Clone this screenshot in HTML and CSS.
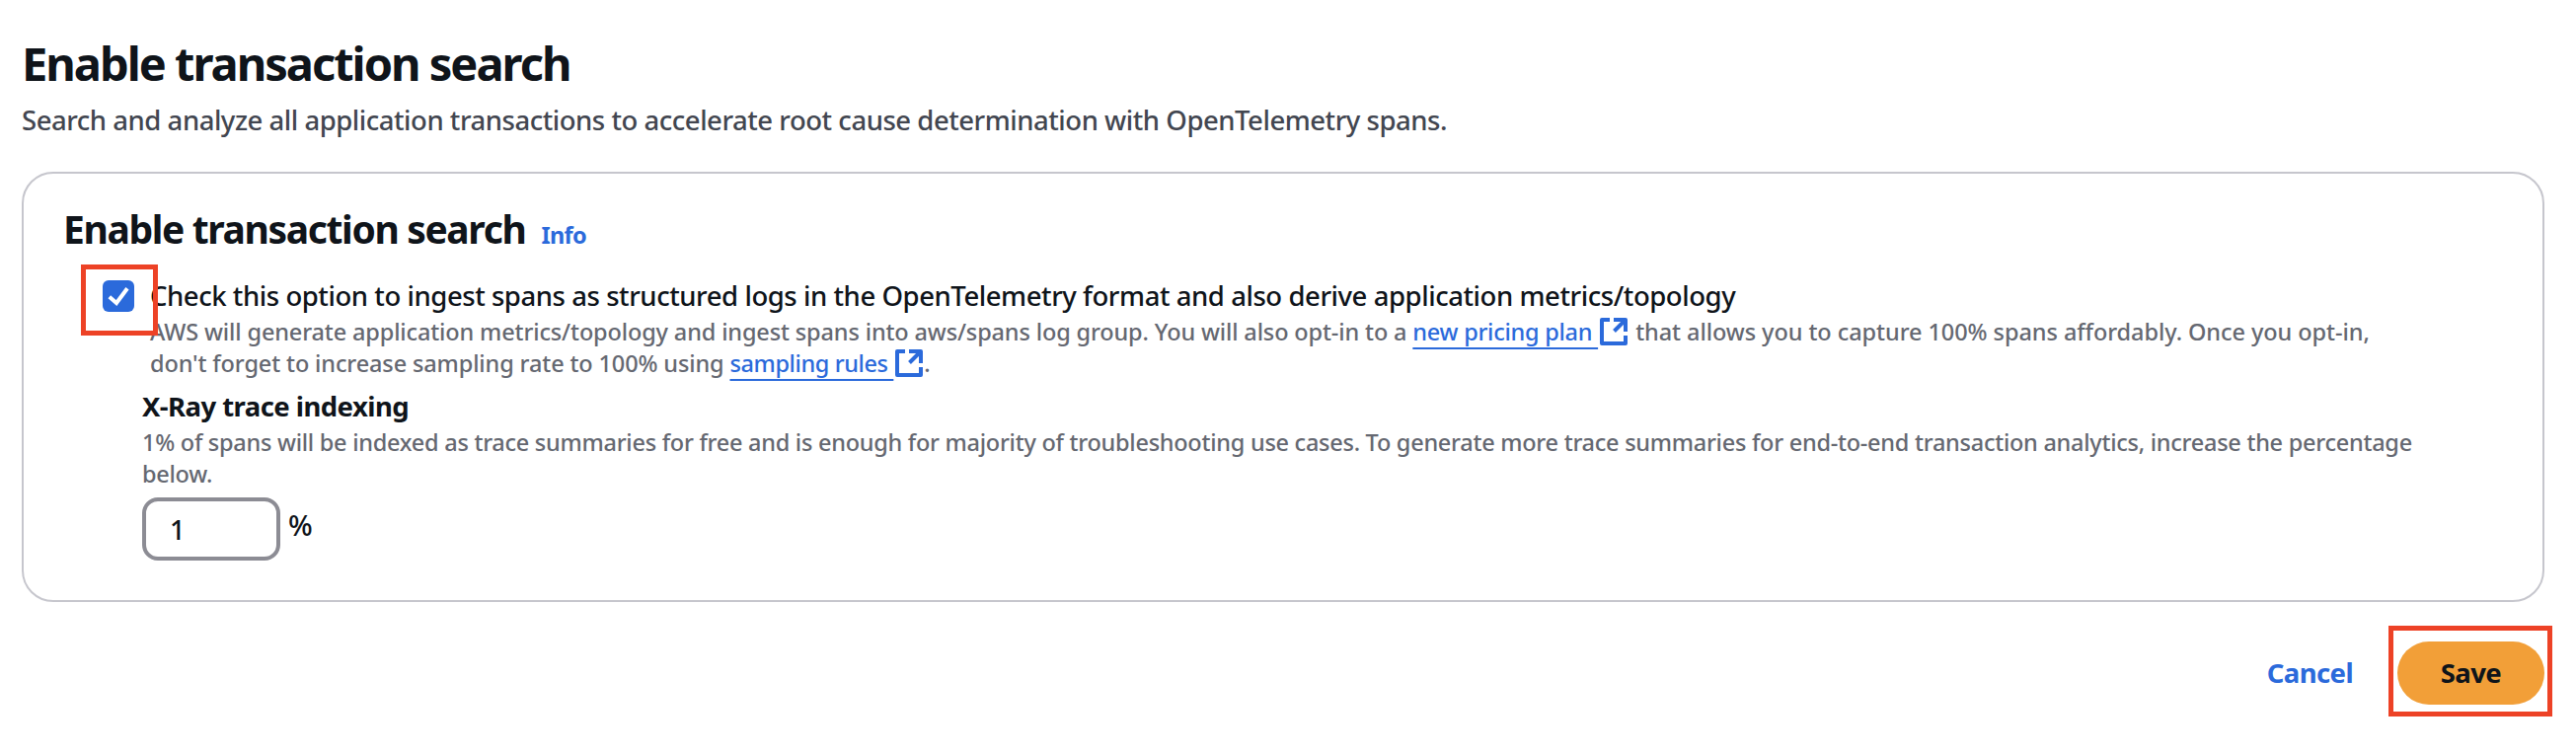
FILE: index.html
```html
<!DOCTYPE html>
<html lang="en">
<head>
<meta charset="utf-8">
<title>Enable transaction search</title>
<link rel="stylesheet" href="styles.css">
</head>
<body>
<svg class="defs" aria-hidden="true">
  <symbol id="external" viewBox="0 0 28 28">
    <path d="M10 2H2V26H26V18M14 2H26V14M25.5 2.5L14.5 13.5" fill="none" stroke="currentColor" stroke-width="4" stroke-linejoin="round"/>
  </symbol>
</svg>
<main class="page">
  <header class="page-header">
    <h1 class="title">Enable transaction search</h1>
    <p class="description">Search and analyze all application transactions to accelerate root cause determination with OpenTelemetry spans.</p>
  </header>
  <section class="card">
    <div class="card-header">
      <h2 class="card-title">Enable transaction search</h2>
      <a class="info">Info</a>
    </div>
    <div class="option">
      <span class="checkbox" role="checkbox" aria-checked="true">
        <svg viewBox="0 0 32 32" width="32" height="32"><path d="M6.8 16.8L14 23L25 8.3" fill="none" stroke="#fff" stroke-width="4"/></svg>
        <span class="mark mark-checkbox"></span>
      </span>
      <div class="option-text">
        <div class="label">Check this option to ingest spans as structured logs in the OpenTelemetry format and also derive application metrics/topology</div>
        <div class="help"><span class="seg-a">AWS will generate application metrics/topology and ingest spans into aws/spans log group. You will also opt-in to a </span><a class="link">new pricing plan&nbsp;</a><svg class="ext"><use href="#external"/></svg><span class="seg-b"> that allows you to capture 100% spans affordably. Once you opt-in,</span><br><span class="seg-c">don't forget to increase sampling rate to 100% using </span><a class="link link-rules">sampling rules&nbsp;</a><svg class="ext"><use href="#external"/></svg><span class="stop">.</span></div>
      </div>
    </div>
    <div class="indexing">
      <h3 class="field-title">X-Ray trace indexing</h3>
      <p class="help field-help">1% of spans will be indexed as trace summaries for free and is enough for majority of troubleshooting use cases. To generate more trace summaries for end-to-end transaction analytics, increase the percentage<br>below.</p>
      <div class="field">
        <input class="input" type="text" value="1">
        <span class="unit">%</span>
      </div>
    </div>
  </section>
  <footer class="actions">
    <a class="cancel">Cancel</a>
    <div class="save-wrap">
      <button class="save">Save</button>
      <span class="mark mark-save"></span>
    </div>
  </footer>
</main>
</body>
</html>
```

FILE: styles.css
```css
* { box-sizing: border-box; }
body {
  margin: 0;
  background: #fff;
  color: #0f141a;
  font: 500 27.5px/40px "Noto Sans", sans-serif;
}
h1, h2, h3, p { margin: 0; }
.defs { display: block; width: 0; height: 0; }
.page { min-height: 764px; padding: 34px 32px 0 22px; }
.title { font-size: 47px; line-height: 60px; font-weight: 700; letter-spacing: -2px; white-space: nowrap; }
.description { margin: 8px 0 32px; color: #424650; letter-spacing: -0.47px; white-space: nowrap; }
.card {
  height: 436px;
  border: 2px solid #c6c6cd;
  border-radius: 32px;
  padding: 32px 40px 0;
}
.card-header { display: flex; align-items: baseline; gap: 16px; height: 48px; }
.card-title { font-size: 39px; line-height: 48px; font-weight: 700; letter-spacing: -1.36px; white-space: nowrap; }
.info { font-size: 23.5px; font-weight: 700; letter-spacing: -0.6px; color: #2b6adb; }
.option { display: flex; margin: 23px 0 0 40px; }
.checkbox {
  position: relative;
  flex: none;
  width: 32px;
  height: 32px;
  margin: 5px 16px 0 0;
  border-radius: 6px;
  background: #2b6adb;
}
.checkbox svg { display: block; }
.mark { position: absolute; border: 5px solid #ed4226; pointer-events: none; }
.mark-checkbox { left: -22px; top: -16px; width: 78px; height: 72px; }
.label { padding-top: 1px; letter-spacing: -0.44px; white-space: nowrap; }
.help { font-size: 23.5px; line-height: 32px; color: #656871; white-space: nowrap; }
.seg-a { letter-spacing: -0.14px; }
.seg-b { margin-left: 2px; letter-spacing: -0.07px; }
.seg-c { letter-spacing: -0.13px; }
.link {
  color: #2b6adb;
  letter-spacing: -0.26px;
  text-decoration: underline 2px;
  text-underline-offset: 7px;
  text-decoration-skip-ink: none;
}
.link-rules { letter-spacing: -0.4px; }
.ext { width: 28px; height: 28px; margin-left: 2px; vertical-align: -5px; color: #2b6adb; }
.stop { margin-left: 1px; }
.indexing { margin: 8px 0 0 80px; }
.field-title { font-size: 27.5px; line-height: 40px; font-weight: 700; letter-spacing: -0.56px; }
.field-help { letter-spacing: -0.262px; }
.field { display: flex; align-items: flex-start; gap: 8px; margin-top: 8px; }
.input {
  width: 140px;
  height: 64px;
  border: 4px solid #8c8c94;
  border-radius: 16px;
  padding: 0 24px;
  background: #fff;
  color: #0f141a;
  font: inherit;
}
.unit { font-size: 29px; line-height: 56px; }
.actions { display: flex; justify-content: flex-end; align-items: center; gap: 45px; margin-top: 40px; }
.cancel { font-weight: 700; letter-spacing: -0.6px; color: #2b6adb; }
.save-wrap { position: relative; }
.save {
  display: block;
  width: 149px;
  height: 64px;
  border: 0;
  border-radius: 32px;
  background: #f29f38;
  color: #0f141a;
  font: inherit;
  font-weight: 700;
  letter-spacing: -0.6px;
}
.mark-save { left: -9px; top: -16px; width: 166px; height: 92px; }
```
